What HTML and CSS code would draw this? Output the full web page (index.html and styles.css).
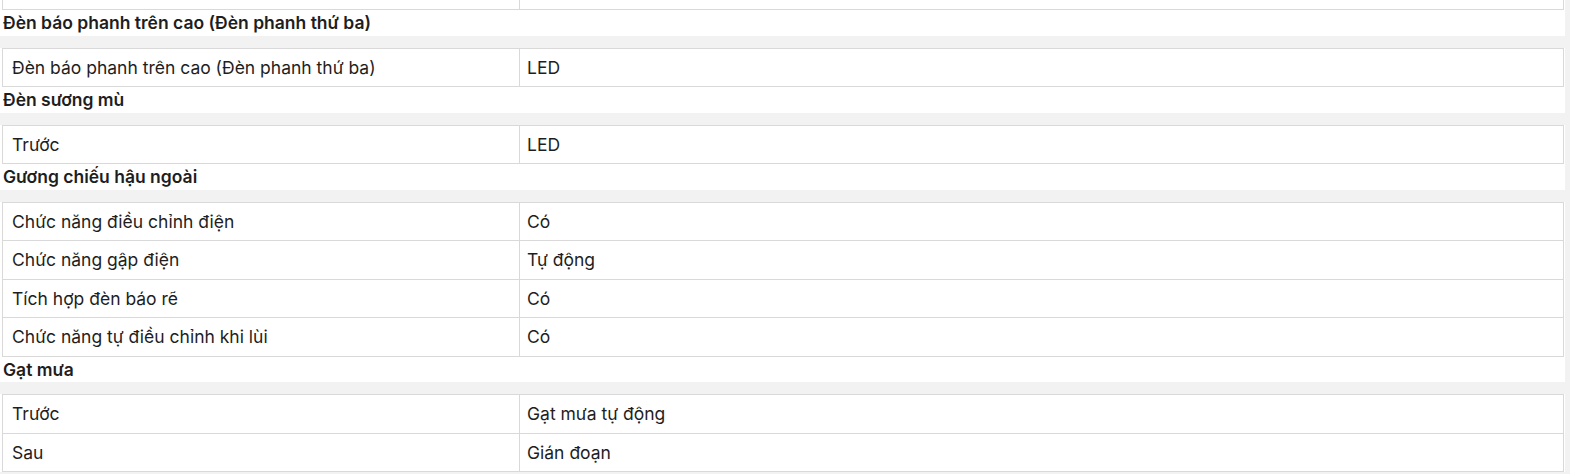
FILE: index.html
```html
<!DOCTYPE html>
<html lang="vi">
<head>
<meta charset="utf-8">
<title>Thông số kỹ thuật</title>
<link rel="stylesheet" href="styles.css">
</head>
<body>
<div class="specs">
  <div class="table-wrap">
    <table class="spec-table">
      <colgroup><col class="col-label"><col class="col-value"></colgroup>
      <tr class="cut-row"><td class="label"></td><td class="value"></td></tr>
    </table>
  </div>

  <div class="group-title">Đèn báo phanh trên cao (Đèn phanh thứ ba)</div>
  <div class="table-wrap">
    <table class="spec-table">
      <colgroup><col class="col-label"><col class="col-value"></colgroup>
      <tr><td class="label">Đèn báo phanh trên cao (Đèn phanh thứ ba)</td><td class="value">LED</td></tr>
    </table>
  </div>

  <div class="group-title">Đèn sương mù</div>
  <div class="table-wrap">
    <table class="spec-table">
      <colgroup><col class="col-label"><col class="col-value"></colgroup>
      <tr><td class="label">Trước</td><td class="value">LED</td></tr>
    </table>
  </div>

  <div class="group-title">Gương chiếu hậu ngoài</div>
  <div class="table-wrap">
    <table class="spec-table">
      <colgroup><col class="col-label"><col class="col-value"></colgroup>
      <tr><td class="label">Chức năng điều chỉnh điện</td><td class="value">Có</td></tr>
      <tr><td class="label">Chức năng gập điện</td><td class="value">Tự động</td></tr>
      <tr><td class="label">Tích hợp đèn báo rẽ</td><td class="value">Có</td></tr>
      <tr><td class="label">Chức năng tự điều chỉnh khi lùi</td><td class="value">Có</td></tr>
    </table>
  </div>

  <div class="group-title">Gạt mưa</div>
  <div class="table-wrap">
    <table class="spec-table">
      <colgroup><col class="col-label"><col class="col-value"></colgroup>
      <tr><td class="label">Trước</td><td class="value">Gạt mưa tự động</td></tr>
      <tr><td class="label">Sau</td><td class="value">Gián đoạn</td></tr>
    </table>
  </div>
</div>
</body>
</html>
```

FILE: styles.css
```css
html, body {
  margin: 0;
  padding: 0;
  background: #f2f2f2;
}

body {
  font-family: Inter, "Open Sans", "DejaVu Sans", sans-serif;
  color: #1e1e1e;
  font-size: 17.5px;
}

.specs {
  width: 1565px;
  display: flex;
  flex-direction: column;
}

.group-title {
  background: #ffffff;
  font-weight: 600;
  line-height: 25.5px;
  padding-left: 3px;
  margin-bottom: 12px;
}

.table-wrap {
  background: #ffffff;
  padding: 0 1px 0 2px;
}

.spec-table {
  width: 100%;
  border-collapse: collapse;
  table-layout: fixed;
}

.col-label {
  width: 517px;
}

.spec-table td {
  border: 1px solid #d9d9d9;
  padding: 6px 8px 6px 9px;
  line-height: 25.5px;
  vertical-align: middle;
}

.spec-table td.value {
  padding-left: 7px;
}

.cut-row td {
  border-top: none;
  padding: 0;
  height: 9px;
  line-height: 9px;
}
```
